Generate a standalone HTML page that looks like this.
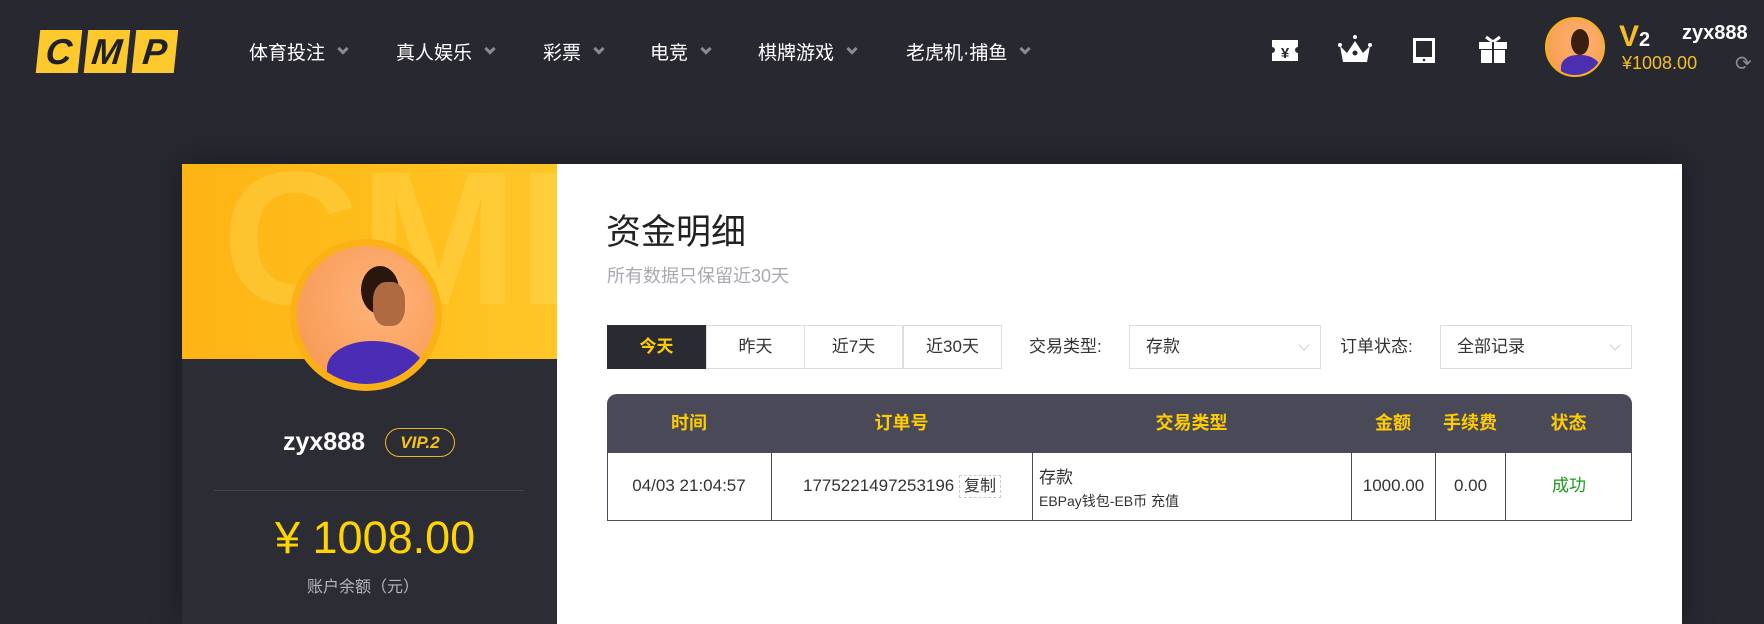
<!DOCTYPE html>
<html><head><meta charset="utf-8"><style>
*{margin:0;padding:0;box-sizing:border-box}
body{width:1764px;height:607px;overflow:hidden;background:#282831;font-family:"Liberation Sans","Noto Sans CJK SC",sans-serif;position:relative;color:#333}
.a{position:absolute}
.nav{color:#fff;font-size:19px;top:38px;white-space:nowrap}
.nav i{display:inline-block;width:8px;height:8px;border-right:3px solid #8b8b95;border-bottom:3px solid #8b8b95;transform:rotate(45deg);margin-left:14px;vertical-align:middle;position:relative;top:-5px}
.logo{top:30px;left:38px;display:flex;gap:6px;transform:skewX(-6deg)}
.logo div{width:42px;height:43px;background:#fec92d;color:#202028;font:italic 900 36px/43px "Liberation Sans",sans-serif;text-align:center}
.card{left:182px;top:164px;width:1500px;height:460px;background:#fff;box-shadow:0 0 30px rgba(0,0,0,.35)}
.side{left:182px;top:164px;width:375px;height:460px;background:#2c2c35}
.ban{left:182px;top:164px;width:375px;height:195px;background:linear-gradient(90deg,#fdb414,#ffbf1c 60%,#ffc629);overflow:hidden}
.tab{top:325px;height:44px;border:1px solid #ddd;font-size:17px;text-align:center;line-height:42px;width:99px;color:#333}
.sel{top:325px;height:44px;border:1px solid #ddd;width:192px;font-size:17px;line-height:42px;padding-left:16px}
.sel:after{content:"";position:absolute;right:12px;top:15px;width:7px;height:7px;border-right:1px solid #ccc;border-bottom:1px solid #ccc;transform:rotate(45deg)}
.th{top:394px;height:59px;color:#ffcc00;font-weight:bold;font-size:18px;line-height:59px;text-align:center}
.td{top:453px;height:68px;font-size:17px;line-height:66px;text-align:center;border-left:1px solid #4a4a58}
</style></head><body>
<div class="a logo"><div>C</div><div>M</div><div>P</div></div>
<div class="a nav" style="left:249px">体育投注<i></i></div>
<div class="a nav" style="left:396px">真人娱乐<i></i></div>
<div class="a nav" style="left:543px">彩票<i></i></div>
<div class="a nav" style="left:650px">电竞<i></i></div>
<div class="a nav" style="left:758px">棋牌游戏<i></i></div>
<div class="a nav" style="left:906px">老虎机·捕鱼<i></i></div>

<svg class="a" style="left:1270px;top:34px" width="240" height="32" viewBox="0 0 240 32">
<path d="M2 6h26v7a3 3 0 0 0 0 6v8H2v-8a3 3 0 0 0 0-6z" fill="#fff"/>
<text x="15" y="24" font-size="15" font-weight="bold" fill="#282831" text-anchor="middle" font-family="Liberation Sans">¥</text>
<path d="M70 12l7 7 8-12 8 12 7-7-3 16H73z" fill="#fff"/><circle cx="70" cy="11" r="2" fill="#fff"/><circle cx="85" cy="3" r="2" fill="#fff"/><circle cx="100" cy="11" r="2" fill="#fff"/><circle cx="85" cy="19" r="2.5" fill="#282831"/>
<rect x="143" y="4" width="22" height="25" fill="#fff"/><rect x="146" y="7" width="16" height="16" fill="#282831"/><circle cx="154" cy="26" r="1.3" fill="#282831"/>
<path d="M209 8h28v7h-28zM211 16h11v13h-11zM224 16h11v13h-11z" fill="#fff"/><path d="M216 3l7 5M230 3l-7 5" stroke="#fff" stroke-width="3"/><rect x="222" y="8" width="2" height="21" fill="#282831"/>
</svg>
<div class="a" style="left:1545px;top:17px;width:60px;height:60px;border-radius:50%;border:2px solid #f5b21e;background:radial-gradient(circle at 60% 40%,#ffb070,#f39a4a);overflow:hidden"><div class="a" style="left:14px;top:36px;width:40px;height:30px;border-radius:40% 50% 0 0;background:#4b2fb0"></div><div class="a" style="left:24px;top:10px;width:18px;height:26px;border-radius:50%;background:#3a1f10"></div></div>
<div class="a" style="left:1619px;top:20px;color:#f7bd25;font:bold 30px/34px 'Liberation Sans',sans-serif">V<span style="color:#fff;font-size:20px">2</span></div>
<div class="a" style="left:1682px;top:22px;color:#fff;font:bold 20px 'Liberation Sans',sans-serif">zyx888</div>
<div class="a" style="left:1622px;top:53px;color:#f7bd25;font-size:18px">¥1008.00</div>
<div class="a" style="left:1735px;top:51px;color:#8b8b95;font-size:20px">⟳</div>

<div class="a card"></div>
<div class="a side"></div>
<div class="a ban"><div class="a" style="left:40px;top:-20px;font:bold 190px/190px 'Liberation Sans',sans-serif;color:rgba(255,230,120,.25)">CMP</div></div>
<div class="a" style="left:290px;top:239px;width:152px;height:152px;border-radius:50%;background:#fbb016;padding:7px"><div style="width:100%;height:100%;border-radius:50%;background:radial-gradient(circle at 60% 40%,#ffb37a,#f5954c);position:relative;overflow:hidden"><div class="a" style="left:30px;top:95px;width:100px;height:60px;border-radius:45% 55% 0 0;background:#4a2db4"></div><div class="a" style="left:64px;top:20px;width:38px;height:48px;border-radius:50%;background:#2a160c"></div><div class="a" style="left:76px;top:36px;width:32px;height:44px;border-radius:40%;background:#b06a42"></div></div></div>
<div class="a" style="left:283px;top:428px;color:#fff;font:bold 25px 'Liberation Sans',sans-serif">zyx888</div>
<div class="a" style="left:385px;top:428px;width:70px;height:29px;border:1px solid #f1b51f;border-radius:15px;color:#f7c21f;font:italic bold 17px/27px 'Liberation Sans',sans-serif;text-align:center">VIP.2</div>
<div class="a" style="left:214px;top:490px;width:310px;height:1px;background:#45454f"></div>
<div class="a" style="left:275px;top:512px;color:#ffd400;font-size:45px">¥ 1008.00</div>
<div class="a" style="left:307px;top:573px;color:#b5b5bd;font-size:16px">账户余额（元）</div>

<div class="a" style="left:606px;top:204px;font-size:35px;color:#222">资金明细</div>
<div class="a" style="left:607px;top:262px;font-size:18px;color:#a9a9b2">所有数据只保留近30天</div>
<div class="a tab" style="left:607px;background:#2a2a33;border-color:#2a2a33;color:#ffcc00;font-weight:bold">今天</div>
<div class="a tab" style="left:706px">昨天</div>
<div class="a tab" style="left:804px">近7天</div>
<div class="a tab" style="left:903px">近30天</div>
<div class="a" style="left:1029px;top:325px;line-height:44px;font-size:17px">交易类型:</div>
<div class="a sel" style="left:1129px">存款</div>
<div class="a" style="left:1340px;top:325px;line-height:44px;font-size:17px">订单状态:</div>
<div class="a sel" style="left:1440px">全部记录</div>

<div class="a" style="left:607px;top:394px;width:1025px;height:59px;background:#4a4958;border-radius:10px 10px 0 0"></div>
<div class="a th" style="left:607px;width:164px">时间</div>
<div class="a th" style="left:771px;width:261px">订单号</div>
<div class="a th" style="left:1032px;width:319px">交易类型</div>
<div class="a th" style="left:1351px;width:84px">金额</div>
<div class="a th" style="left:1435px;width:70px">手续费</div>
<div class="a th" style="left:1505px;width:127px">状态</div>
<div class="a" style="left:607px;top:453px;width:1025px;height:68px;border:1px solid #4a4a58;border-top:0"></div>
<div class="a td" style="left:607px;width:164px;border-left:0">04/03 21:04:57</div>
<div class="a td" style="left:771px;width:261px">1775221497253196 <span style="border:1px dashed #ccc;padding:2px 4px;font-size:16px">复制</span></div>
<div class="a td" style="left:1032px;width:319px;text-align:left;padding-left:6px;line-height:normal"><div style="margin-top:10px;font-size:17px">存款</div><div style="font-size:14px;margin-top:3px">EBPay钱包-EB币 充值</div></div>
<div class="a td" style="left:1351px;width:84px">1000.00</div>
<div class="a td" style="left:1435px;width:70px">0.00</div>
<div class="a td" style="left:1505px;width:127px;color:#1a9a1a">成功</div>
</body></html>
